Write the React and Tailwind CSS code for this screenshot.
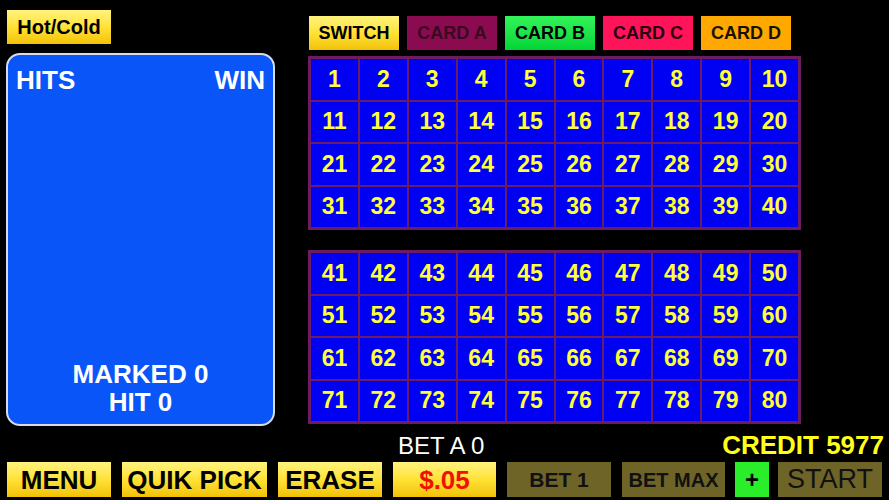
import React from "react";

const yellowBtn =
  "bg-gradient-to-b from-[#fff37a] via-[#ffe233] to-[#f2c200] text-black";

function TopBtn({ label, cls }) {
  return (
    <div
      className={`w-[90px] h-[34px] flex items-center justify-center text-[18px] font-bold leading-none ${cls}`}
    >
      {label}
    </div>
  );
}

function Grid({ start }) {
  const nums = Array.from({ length: 40 }, (_, i) => start + i);
  return (
    <div className="w-[493px] h-[174px] bg-[#6e1c62] p-[3px]">
      <div className="grid grid-cols-10 grid-rows-4 gap-[2px] w-full h-full">
        {nums.map((n) => (
          <div
            key={n}
            className="bg-[#0000f2] flex items-center justify-center text-[#ffff3a] font-bold text-[23px] leading-none"
          >
            {n}
          </div>
        ))}
      </div>
    </div>
  );
}

function BottomBtn({ label, w, cls, text }) {
  return (
    <div
      className={`h-[35px] flex items-center justify-center leading-none ${w} ${cls} ${text}`}
    >
      {label}
    </div>
  );
}

export default function App() {
  return (
    <div
      className="w-[889px] h-[500px] bg-black overflow-hidden flex flex-col"
      style={{ fontFamily: '"Liberation Sans", Arial, sans-serif' }}
    >
      <div className="h-[430px] flex">
        <div className="ml-[6px] w-[269px] flex flex-col">
          <div
            className={`mt-[10px] ml-[1px] w-[104px] h-[34px] flex items-center justify-center text-[20px] font-bold leading-none ${yellowBtn}`}
          >
            Hot/Cold
          </div>
          <div className="mt-[9px] h-[373px] rounded-[14px] border-2 border-[#d6dcea] bg-[#0a55f7] flex flex-col justify-between px-[8px] pt-[12px] pb-[9px] text-white font-bold text-[26px] leading-none">
            <div className="flex justify-between">
              <span>HITS</span>
              <span>WIN</span>
            </div>
            <div className="flex flex-col items-center gap-[2px]">
              <span>MARKED 0</span>
              <span>HIT 0</span>
            </div>
          </div>
        </div>
        <div className="ml-[33px] flex flex-col">
          <div className="mt-[16px] ml-[1px] flex gap-[8px]">
            <TopBtn label="SWITCH" cls={yellowBtn} />
            <TopBtn label="CARD A" cls="bg-[#8a0b50] text-[#3a0820]" />
            <TopBtn
              label="CARD B"
              cls="bg-gradient-to-b from-[#30f45a] to-[#00d436] text-black"
            />
            <TopBtn label="CARD C" cls="bg-[#ff145a] text-[#2a0010]" />
            <TopBtn label="CARD D" cls="bg-[#ffa800] text-[#1a1000]" />
          </div>
          <div className="mt-[6px]">
            <Grid start={1} />
          </div>
          <div className="mt-[20px]">
            <Grid start={41} />
          </div>
        </div>
      </div>
      <div className="h-[32px] flex items-end pb-[4px]">
        <span className="ml-[398px] text-white text-[24px] leading-none">
          BET A 0
        </span>
        <span className="ml-auto mr-[5px] text-[#ffff1a] font-bold text-[26px] leading-none">
          CREDIT 5977
        </span>
      </div>
      <div className="flex items-start">
        <div className="ml-[7px]">
          <BottomBtn label="MENU" w="w-[104px]" cls={yellowBtn} text="text-[26px] font-bold" />
        </div>
        <div className="ml-[11px]">
          <BottomBtn label="QUIK PICK" w="w-[145px]" cls={yellowBtn} text="text-[26px] font-bold" />
        </div>
        <div className="ml-[11px]">
          <BottomBtn label="ERASE" w="w-[104px]" cls={yellowBtn} text="text-[26px] font-bold" />
        </div>
        <div className="ml-[11px]">
          <BottomBtn
            label="$.05"
            w="w-[103px]"
            cls="bg-gradient-to-b from-[#fff37a] via-[#ffe233] to-[#f2c200]"
            text="text-[26px] font-bold text-[#ee1100]"
          />
        </div>
        <div className="ml-[11px]">
          <BottomBtn label="BET 1" w="w-[104px]" cls="bg-[#6f6428] text-[#111]" text="text-[21px] font-bold" />
        </div>
        <div className="ml-[11px]">
          <BottomBtn label="BET MAX" w="w-[103px]" cls="bg-[#6f6428] text-[#111]" text="text-[20px] font-bold" />
        </div>
        <div className="ml-[10px]">
          <BottomBtn label="+" w="w-[34px]" cls="bg-[#2aee2a] text-black font-bold" text="text-[24px]" />
        </div>
        <div className="ml-[9px]">
          <BottomBtn label="START" w="w-[104px]" cls="bg-[#6f6428] text-[#111]" text="text-[27px]" />
        </div>
      </div>
    </div>
  );
}
